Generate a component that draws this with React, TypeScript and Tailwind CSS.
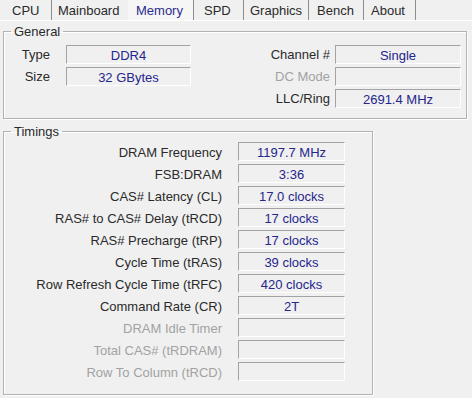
const TABS = [
  { name: 'CPU', cls: 'w-[52px] pl-[12px] border-r border-[#8c8c8c]' },
  { name: 'Mainboard', cls: 'w-[76px] pl-[6px]' },
  { name: 'Memory', cls: 'w-[66px] pl-[8px] border-r border-[#8c8c8c] bg-[#f6f6f6] text-[#2b2b8f]', active: true },
  { name: 'SPD', cls: 'w-[50px] pl-[10px] border-r border-[#8c8c8c]' },
  { name: 'Graphics', cls: 'w-[65px] pl-[6px] border-r border-[#8c8c8c]' },
  { name: 'Bench', cls: 'w-[55px] pl-[8px] border-r border-[#8c8c8c]' },
  { name: 'About', cls: 'w-[52px] pl-[7px] border-r border-[#8c8c8c]' },
];

type Row = { label: string; value: string; disabled?: boolean };

const TIMINGS: Row[] = [
  { label: 'DRAM Frequency', value: '1197.7 MHz' },
  { label: 'FSB:DRAM', value: '3:36' },
  { label: 'CAS# Latency (CL)', value: '17.0 clocks' },
  { label: 'RAS# to CAS# Delay (tRCD)', value: '17 clocks' },
  { label: 'RAS# Precharge (tRP)', value: '17 clocks' },
  { label: 'Cycle Time (tRAS)', value: '39 clocks' },
  { label: 'Row Refresh Cycle Time (tRFC)', value: '420 clocks' },
  { label: 'Command Rate (CR)', value: '2T' },
  { label: 'DRAM Idle Timer', value: '', disabled: true },
  { label: 'Total CAS# (tRDRAM)', value: '', disabled: true },
  { label: 'Row To Column (tRCD)', value: '', disabled: true },
];

function Field({ value, width }: { value: string; width: string }) {
  return (
    <div
      className={`${width} h-[19px] flex items-center justify-center pt-[1px] border border-t-[#a3a3a3] border-l-[#a3a3a3] border-b-white border-r-white text-[#25258c]`}
    >
      {value}
    </div>
  );
}

function Group({ title, width, children }: { title: string; width: string; children: React.ReactNode }) {
  return (
    <fieldset className={`ml-[3px] ${width} border border-[#b2b2b2] shadow-[inset_1px_1px_0_#fff,1px_1px_0_#fff]`}>
      <legend className="ml-[7px] px-[3px] leading-[15px] text-[#2a2a2a]">{title}</legend>
      {children}
    </fieldset>
  );
}

export default function App() {
  return (
    <div
      className="w-[472px] h-[398px] bg-[#f0f0f0] text-[13px] leading-[15px] text-[#2a2a2a] overflow-hidden"
      style={{ fontFamily: '"Liberation Sans", Arial, sans-serif' }}
    >
      <div className="flex h-[21px] border-b border-white">
        {TABS.map((t) => (
          <div key={t.name} className={`h-[20px] pt-[1px] flex items-center ${t.cls}`}>
            {t.name}
          </div>
        ))}
      </div>

      <div className="mt-[3px]">
        <Group title="General" width="w-[464px]">
          <div className="pt-[6px] pb-[10px] flex flex-col gap-[3px]">
            <div className="flex items-center">
              <span className="w-[46px] text-right">Type</span>
              <span className="w-[16px]" />
              <Field value="DDR4" width="w-[125px]" />
              <span className="w-[139px] text-right">Channel #</span>
              <span className="w-[5px]" />
              <Field value="Single" width="w-[126px]" />
            </div>
            <div className="flex items-center">
              <span className="w-[46px] text-right">Size</span>
              <span className="w-[16px]" />
              <Field value="32 GBytes" width="w-[125px]" />
              <span className="w-[139px] text-right text-[#a2a2a2]">DC Mode</span>
              <span className="w-[5px]" />
              <Field value="" width="w-[126px]" />
            </div>
            <div className="flex items-center">
              <span className="w-[187px]" />
              <span className="w-[139px] text-right">LLC/Ring</span>
              <span className="w-[5px]" />
              <Field value="2691.4 MHz" width="w-[126px]" />
            </div>
          </div>
        </Group>
      </div>

      <div className="mt-[5px]">
        <Group title="Timings" width="w-[370px]">
          <div className="pt-[3px] pb-[13px] flex flex-col gap-[3px]">
            {TIMINGS.map((r) => (
              <div key={r.label} className="flex items-center">
                <span className={`w-[218px] pt-[2px] text-right ${r.disabled ? 'text-[#a2a2a2]' : ''}`}>{r.label}</span>
                <span className="w-[16px]" />
                <Field value={r.value} width="w-[107px]" />
              </div>
            ))}
          </div>
        </Group>
      </div>
    </div>
  );
}
